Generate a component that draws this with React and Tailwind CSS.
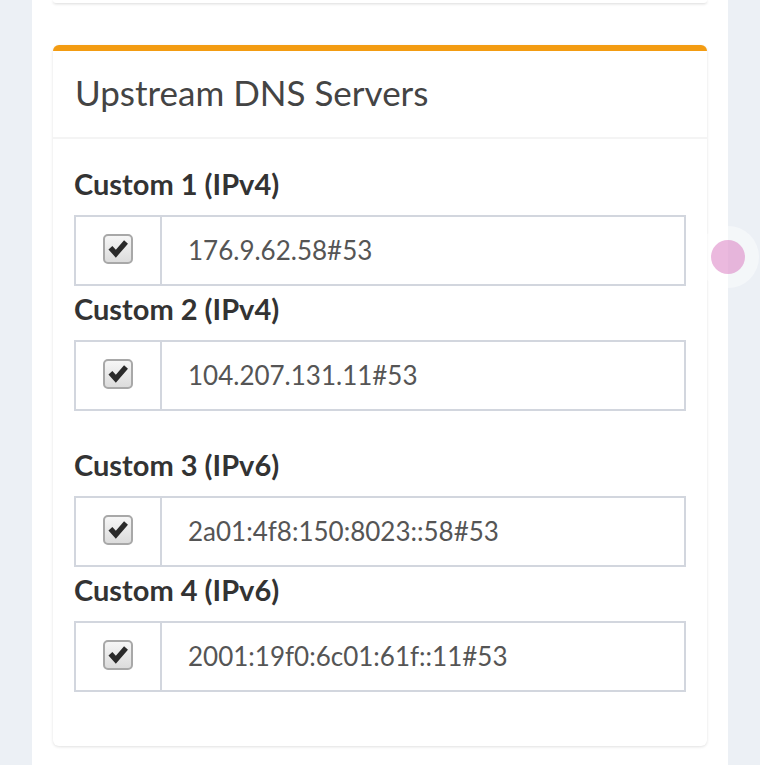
import React from "react";

const groups = [
  [
    { label: "Custom 1 (IPv4)", value: "176.9.62.58#53" },
    { label: "Custom 2 (IPv4)", value: "104.207.131.11#53" },
  ],
  [
    { label: "Custom 3 (IPv6)", value: "2a01:4f8:150:8023::58#53" },
    { label: "Custom 4 (IPv6)", value: "2001:19f0:6c01:61f::11#53" },
  ],
];

function Check() {
  return (
    <div className="w-[30px] h-[30px] rounded-[5px] border-2 border-[#a8a8a8] bg-gradient-to-b from-[#f6f6f6] to-[#dcdcdc] flex items-center justify-center -translate-y-[2px]">
      <svg width="26" height="26" viewBox="0 0 30 30">
        <path d="M4 15.5 L8.5 11.5 L12.5 16 L22 5 L26.5 9 L12.5 25 Z" fill="#2a2a2a" />
      </svg>
    </div>
  );
}

function Row({ label, value }) {
  return (
    <div>
      <label className="block h-[30px] leading-[30px] mb-[16px] font-bold text-[29px] text-[#333]">
        {label}
      </label>
      <div className="flex h-[71px] border-2 border-[#d2d6de]">
        <div className="w-[86px] border-r-2 border-[#d2d6de] flex items-center justify-center">
          <Check />
        </div>
        <div className="flex-1 flex items-center pl-[26px] text-[26px] text-[#555]">
          {value}
        </div>
      </div>
    </div>
  );
}

export default function App() {
  return (
    <div
      className="relative min-h-[765px] bg-[#ecf0f5] px-[32px] overflow-hidden"
      style={{ fontFamily: "Lato, 'Open Sans', sans-serif" }}
    >
      <div className="bg-white min-h-[765px] px-[21px]">
        <div className="h-[3px] bg-white rounded-b-[6px] shadow-[0_1px_3px_rgba(0,0,0,0.15)]" />
        <div className="mt-[42px] bg-white rounded-[6px] border-t-[6px] border-[#f39c12] shadow-[0_1px_3px_rgba(0,0,0,0.12)]">
          <div className="h-[88px] border-b-2 border-[#f4f4f4] flex items-center pl-[22px] pb-[4px] text-[35px] text-[#444]">
            Upstream DNS Servers
          </div>
          <div className="px-[21px] pt-[30px] pb-[54px]">
            {groups.map((g, gi) => (
              <div key={gi} className={gi === 0 ? "mb-[39px]" : ""}>
                {g.map((r, ri) => (
                  <div key={ri} className={ri === 0 ? "mb-[8px]" : ""}>
                    <Row {...r} />
                  </div>
                ))}
              </div>
            ))}
          </div>
        </div>
      </div>
      <div className="absolute left-[697px] top-[226px] w-[62px] h-[62px] rounded-full bg-[rgba(255,255,255,0.45)] flex items-center justify-center">
        <div className="w-[34px] h-[34px] rounded-full bg-[rgba(215,115,189,0.5)]" />
      </div>
    </div>
  );
}
